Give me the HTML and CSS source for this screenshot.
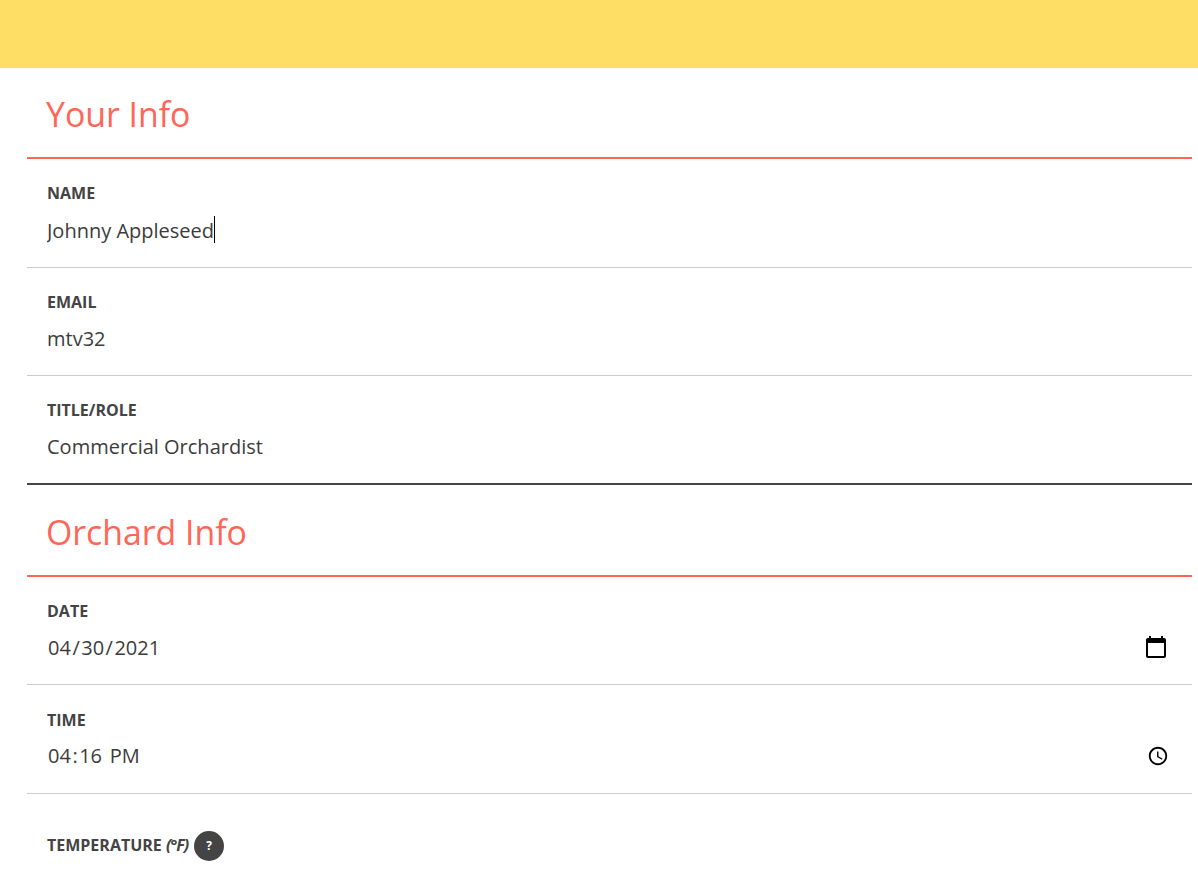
FILE: index.html
```html
<!DOCTYPE html>
<html lang="en">
<head>
<meta name="viewport" content="width=device-width, initial-scale=1">
<title>Orchard Form</title>
<link rel="stylesheet" href="styles.css">
</head>
<body>
  <header class="top-bar"></header>
  <form class="container">
    <section class="group">
      <h2>Your Info</h2>
      <div class="field field-name">
        <label for="name">Name</label>
        <div class="input-wrap">
          <input type="text" id="name" value="Johnny Appleseed">
          <span class="caret"></span>
        </div>
      </div>
      <div class="field">
        <label for="email">Email</label>
        <input type="text" id="email" value="mtv32">
      </div>
      <div class="field field-role">
        <label for="role">Title/Role</label>
        <input type="text" id="role" value="Commercial Orchardist">
      </div>
    </section>
    <section class="group group-orchard">
      <h2>Orchard Info</h2>
      <div class="field">
        <label for="date">Date</label>
        <input type="date" id="date" value="2021-04-30">
      </div>
      <div class="field field-time">
        <label for="time">Time</label>
        <input type="time" id="time" value="16:16">
      </div>
      <div class="field field-temp">
        <label for="temp">Temperature&nbsp;<em>(°F)</em><span class="help">?</span></label>
      </div>
    </section>
  </form>
</body>
</html>
```

FILE: styles.css
```css
* {
  box-sizing: border-box;
}

html, body {
  height: 885px;
  overflow: hidden;
}

body {
  margin: 0;
  background-color: white;
  color: #444;
  font-family: "Open Sans", sans-serif;
}

.top-bar {
  height: 68px;
  background-color: #ffde66;
}

.container {
  padding: 0 6px 0 27px;
}

.group {
  border-bottom: 2px solid #444;
}

.group-orchard {
  border-bottom: none;
}

h2 {
  margin: 0;
  height: 91px;
  padding: 23px 0 0 19px;
  border-bottom: 2px solid #ff6657;
  color: #ff6657;
  font-size: 33.8px;
  font-weight: 400;
  line-height: 46px;
}

.group-orchard h2 {
  height: 92px;
  padding-top: 24px;
}

.field {
  height: 108px;
  padding: 24px 20px 0;
  border-bottom: 1px solid #ccc;
}

label {
  display: block;
  font-size: 16px;
  font-weight: 700;
  line-height: 20px;
  text-transform: uppercase;
}

label em {
  font-size: 16px;
  letter-spacing: -1px;
  text-transform: none;
}

input {
  display: block;
  width: 100%;
  height: 28px;
  margin-top: 13px;
  padding: 0;
  border: none;
  outline: none;
  background: none;
  color: #3c3c3c;
  font-family: "Open Sans", sans-serif;
  font-size: 20px;
  line-height: 28px;
}

input[type=date]::-webkit-calendar-picker-indicator {
  width: 26px;
  height: 26px;
  margin-right: 3px;
  padding: 0;
}

input[type=time]::-webkit-calendar-picker-indicator {
  width: 22px;
  height: 22px;
  margin-right: 3px;
  padding: 0;
}

input::-webkit-datetime-edit-text {
  padding: 0 .5px;
}

input::-webkit-datetime-edit-ampm-field {
  margin-left: 2px;
}

.field-name {
  height: 109px;
}

.input-wrap {
  position: relative;
}

.field-name input {
  margin-top: 14px;
}

.caret {
  position: absolute;
  top: -1px;
  left: 167px;
  width: 1px;
  height: 27px;
  background-color: black;
}

.field-role {
  height: 107px;
  border-bottom: none;
}

.field-time {
  height: 109px;
  padding-top: 25px;
}

.field-time input {
  margin-top: 12px;
}

.field-temp {
  padding-top: 35px;
  border-bottom: none;
}

.field-temp label {
  display: flex;
  align-items: center;
}

.help {
  width: 30px;
  height: 30px;
  margin-top: 2px;
  margin-left: 6px;
  border-radius: 50%;
  background-color: #444;
  color: white;
  font-size: 12px;
  line-height: 30px;
  text-align: center;
}
```
